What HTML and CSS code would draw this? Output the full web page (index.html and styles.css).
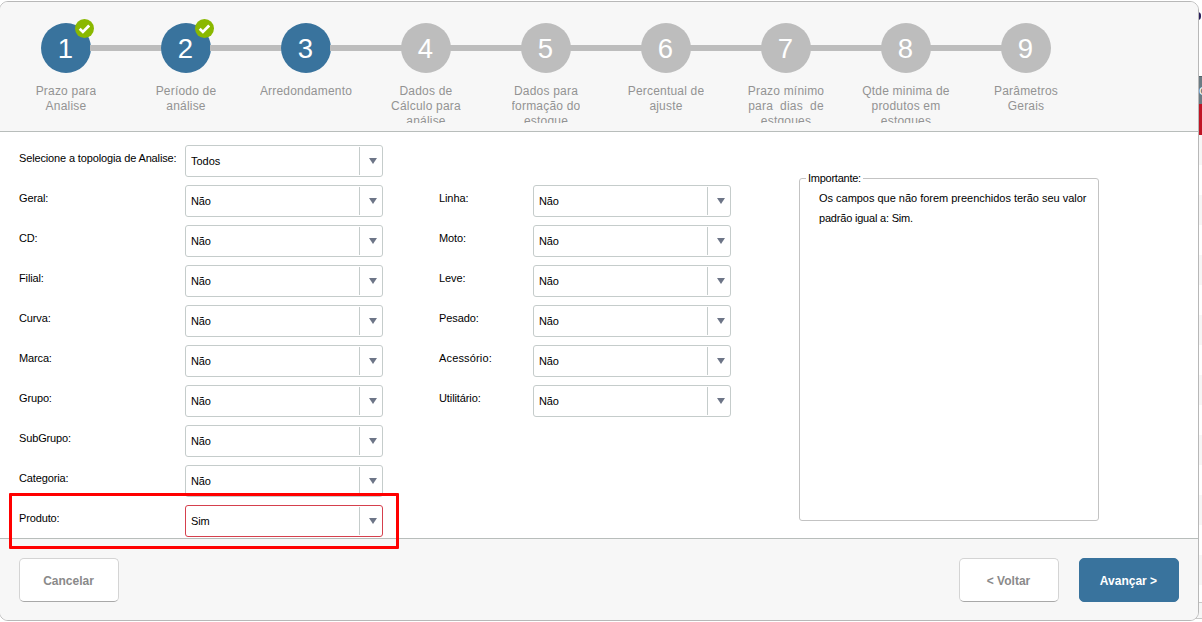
FILE: index.html
```
<!DOCTYPE html>
<html lang="pt-BR">
<head>
<meta charset="utf-8">
<title>Arredondamento</title>
<link rel="stylesheet" href="styles.css">
</head>
<body>
<div class="backdrop">
  <div class="bg-dot"></div>
  <div class="bg-head">C</div>
  <div class="bg-red"></div>
  <div class="bg-stripes"></div>
  <div class="bg-bar"></div>
</div>
<main class="dialog">
  <header class="steps">
    <div class="step done"><div class="circle">1<svg class="check" viewBox="0 0 19 19"><circle cx="9.5" cy="9.5" r="9.5"/><path d="M4.7 9.8l3.2 3.1 6.3-6.4"/></svg></div><div class="caption">Prazo para<br>Analise</div></div>
    <div class="step done"><div class="circle">2<svg class="check" viewBox="0 0 19 19"><circle cx="9.5" cy="9.5" r="9.5"/><path d="M4.7 9.8l3.2 3.1 6.3-6.4"/></svg></div><div class="caption">Período de<br>análise</div></div>
    <div class="step done"><div class="circle">3</div><div class="caption">Arredondamento</div></div>
    <div class="step"><div class="circle">4</div><div class="caption">Dados de<br>Cálculo para<br>análise</div></div>
    <div class="step"><div class="circle">5</div><div class="caption">Dados para<br>formação do<br>estoque</div></div>
    <div class="step"><div class="circle">6</div><div class="caption">Percentual de<br>ajuste</div></div>
    <div class="step"><div class="circle">7</div><div class="caption">Prazo mínimo<br>para&nbsp; dias&nbsp; de<br>estqoues</div></div>
    <div class="step"><div class="circle">8</div><div class="caption">Qtde minima de<br>produtos em<br>estoques</div></div>
    <div class="step"><div class="circle">9</div><div class="caption">Parâmetros<br>Gerais</div></div>
  </header>
  <section class="content">
    <div class="fields first">
      <div class="row"><label>Selecione a topologia de Analise:</label><div class="select"><span>Todos</span><i></i></div></div>
      <div class="row"><label>Geral:</label><div class="select"><span>Não</span><i></i></div></div>
      <div class="row"><label>CD:</label><div class="select"><span>Não</span><i></i></div></div>
      <div class="row"><label>Filial:</label><div class="select"><span>Não</span><i></i></div></div>
      <div class="row"><label>Curva:</label><div class="select"><span>Não</span><i></i></div></div>
      <div class="row"><label>Marca:</label><div class="select"><span>Não</span><i></i></div></div>
      <div class="row"><label>Grupo:</label><div class="select"><span>Não</span><i></i></div></div>
      <div class="row"><label>SubGrupo:</label><div class="select"><span>Não</span><i></i></div></div>
      <div class="row"><label>Categoria:</label><div class="select"><span>Não</span><i></i></div></div>
      <div class="row"><label>Produto:</label><div class="select invalid"><span>Sim</span><i></i></div></div>
    </div>
    <div class="fields second">
      <div class="row"><label>Linha:</label><div class="select"><span>Não</span><i></i></div></div>
      <div class="row"><label>Moto:</label><div class="select"><span>Não</span><i></i></div></div>
      <div class="row"><label>Leve:</label><div class="select"><span>Não</span><i></i></div></div>
      <div class="row"><label>Pesado:</label><div class="select"><span>Não</span><i></i></div></div>
      <div class="row"><label class="wide">Acessório:</label><div class="select"><span>Não</span><i></i></div></div>
      <div class="row"><label>Utilitário:</label><div class="select"><span>Não</span><i></i></div></div>
    </div>
    <fieldset class="note">
      <legend>Importante:</legend>
      <p>Os campos que não forem preenchidos terão seu valor<br><span class="tight">padrão igual a: Sim.</span></p>
    </fieldset>
  </section>
  <footer class="actions">
    <button class="btn cancel">Cancelar</button>
    <button class="btn back">&lt; Voltar</button>
    <button class="btn next">Avançar &gt;</button>
  </footer>
</main>
<div class="highlight"></div>
</body>
</html>
```
FILE: styles.css
```
* { box-sizing: border-box; }
body {
  margin: 0;
  width: 1202px;
  height: 622px;
  overflow: hidden;
  position: relative;
  background: #fff;
  font-family: "Liberation Sans", Arial, sans-serif;
  font-size: 11px;
  color: #000;
}
/* sliver of the page behind the dialog */
.backdrop {
  position: absolute;
  top: 0;
  right: 0;
  width: 6px;
  height: 622px;
  overflow: hidden;
}
.bg-dot { width: 7px; height: 8px; margin: 12px 0 0 -2px; border-radius: 4px; background: #2a1f5c; }
.bg-head { margin-top: 56px; height: 28px; border-top: 1px solid #55646b; background: #6b7b83; color: #fff; font-size: 11px; line-height: 29px; padding-left: 3px; }
.bg-red { height: 31px; background: #c01525; }
.bg-stripes { height: 467px; background: repeating-linear-gradient(#f6f6f6 0 30px, #fff 30px 60px); }
.bg-bar { height: 17px; border-top: 1px solid #c8c8c8; border-bottom: 1px solid #c8c8c8; background: #f6f6f6; }

.dialog {
  position: relative;
  width: 1200px;
  height: 620px;
  margin: 1px 0 0 -1px;
  display: flex;
  flex-direction: column;
  background: #fff;
  border: 1px solid #b8b8b8;
  border-radius: 9px;
  overflow: hidden;
}
.steps {
  flex: 0 0 130px;
  display: flex;
  padding: 21px 0 0 6px;
  background: #f7f7f7;
  border-bottom: 1px solid #b8bdbb;
}
.step { width: 120px; display: flex; flex-direction: column; align-items: center; position: relative; }
.step + .step::before {
  content: "";
  position: absolute;
  top: 22px;
  left: -36px;
  width: 72px;
  height: 6px;
  background: #bdbdbd;
}
.circle {
  position: relative;
  width: 50px;
  height: 50px;
  padding-right: 1px;
  border-radius: 50%;
  background: #bdbdbd;
  color: #fff;
  font-size: 27.5px;
  line-height: 52px;
  text-align: center;
}
.done .circle { background: #39739d; }
.check { position: absolute; top: -4px; left: 34px; width: 19px; height: 19px; }
.check circle { fill: #8ab800; }
.check path { fill: none; stroke: #fff; stroke-width: 2.8; }
.caption {
  margin-top: 10px;
  padding-top: 1px;
  height: 40px;
  overflow: hidden;
  color: #939393;
  font-size: 12px;
  line-height: 15px;
  letter-spacing: 0.2px;
  text-align: center;
  white-space: nowrap;
}
.content { flex: 0 0 407px; display: flex; align-items: flex-start; padding: 13px 0 0 19px; border-bottom: 1px solid #b8bdbb; }
.fields { display: flex; flex-direction: column; gap: 8px; }
.first { width: 420px; }
.second { width: 360px; margin-top: 40px; }
.row { display: flex; height: 32px; }
.row label { flex: 0 0 166px; line-height: 13px; padding-top: 7px; white-space: nowrap; letter-spacing: -0.14px; }
.second .row label { flex-basis: 94px; letter-spacing: -0.1px; }
.second .row .wide { letter-spacing: 0.15px; }
.select {
  width: 198px;
  height: 32px;
  display: flex;
  align-items: center;
  padding: 0 0 0 5px;
  background: #fff;
  border: 1px solid #c5cccb;
  border-radius: 3px;
}
.select span { flex: 1; letter-spacing: -0.2px; }
.first .row:first-child .select span { letter-spacing: 0; }
.select i { width: 23px; height: 28px; border-left: 1px solid #c5cccb; display: flex; align-items: center; padding-left: 9px; }
.select i::before { content: ""; border: 4px solid transparent; border-top: 6px solid #6d7587; border-bottom: 0; }
.select.invalid { border-color: #d5404d; }
.note {
  width: 300px;
  height: 349px;
  margin: 27px 0 0;
  padding: 3px 0 0 19px;
  border: 1px solid #c3c3c3;
  border-radius: 3px;
}
.note legend { margin-left: -13px; padding: 0 2px; line-height: 13px; letter-spacing: -0.25px; }
.note p { margin: 0; line-height: 20px; white-space: nowrap; letter-spacing: -0.02px; }
.note .tight { letter-spacing: -0.2px; }
.actions { flex: 1; display: flex; align-items: flex-start; padding: 19px 19px 0; gap: 20px; background: #f7f7f7; }
.btn {
  width: 100px;
  height: 44px;
  padding: 1px 1px 0 0;
  border: 1px solid #d4d4d4;
  border-bottom-color: #a8a8a8;
  border-radius: 5px;
  background: #fff;
  color: #8a8a8a;
  font: bold 12px "Liberation Sans", Arial, sans-serif;
}
.cancel { margin-right: auto; }
.btn.next { border-color: #39739d; background: #39739d; color: #fff; }
/* annotation frame around the last field */
.highlight { position: absolute; left: 9px; top: 493px; width: 390px; height: 56px; border: 3px solid #f00; border-radius: 1px; }
```
